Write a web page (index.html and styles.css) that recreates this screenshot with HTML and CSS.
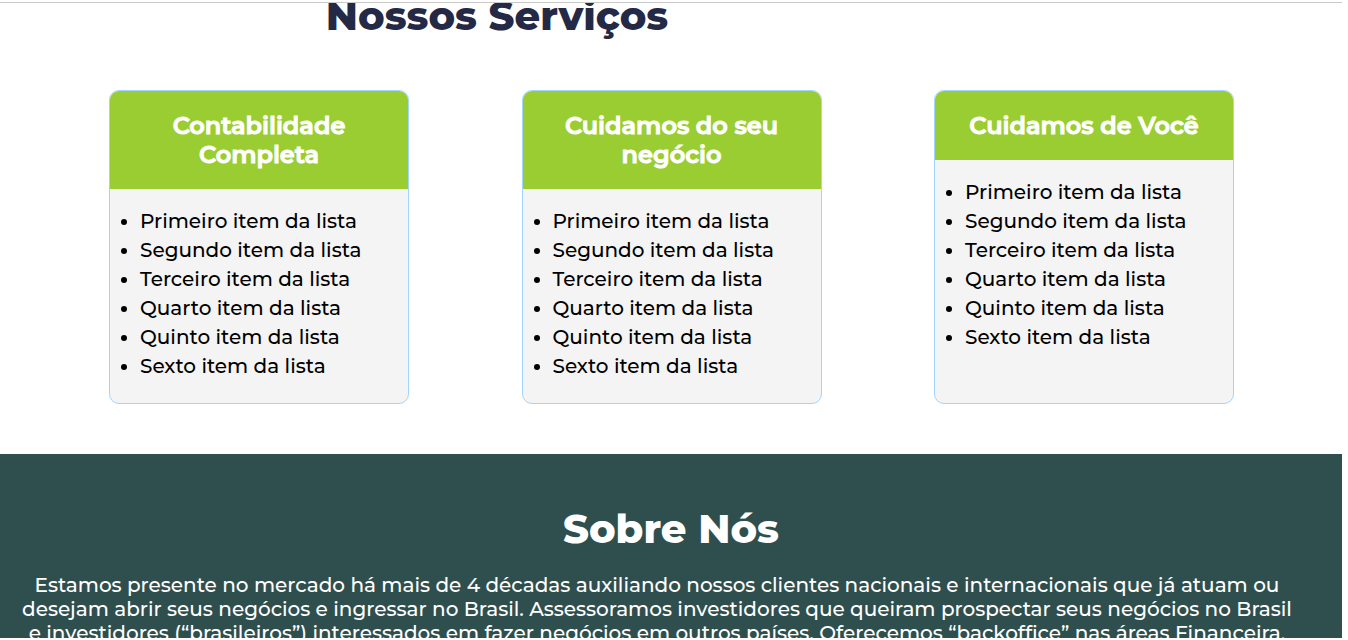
FILE: index.html
```html
<!DOCTYPE html>
<html lang="pt-BR">
<head>
<meta charset="utf-8">
<title>Nossos Serviços</title>
<link rel="stylesheet" href="styles.css">
</head>
<body>
<div class="page">
  <section class="services">
    <h2 class="services-title">Nossos Serviços</h2>
    <div class="cards">
      <article class="card">
        <h3 class="card-title">Contabilidade Completa</h3>
        <ul class="card-list">
          <li>Primeiro item da lista</li>
          <li>Segundo item da lista</li>
          <li>Terceiro item da lista</li>
          <li>Quarto item da lista</li>
          <li>Quinto item da lista</li>
          <li>Sexto item da lista</li>
        </ul>
      </article>
      <article class="card">
        <h3 class="card-title">Cuidamos do seu negócio</h3>
        <ul class="card-list">
          <li>Primeiro item da lista</li>
          <li>Segundo item da lista</li>
          <li>Terceiro item da lista</li>
          <li>Quarto item da lista</li>
          <li>Quinto item da lista</li>
          <li>Sexto item da lista</li>
        </ul>
      </article>
      <article class="card">
        <h3 class="card-title">Cuidamos de Você</h3>
        <ul class="card-list">
          <li>Primeiro item da lista</li>
          <li>Segundo item da lista</li>
          <li>Terceiro item da lista</li>
          <li>Quarto item da lista</li>
          <li>Quinto item da lista</li>
          <li>Sexto item da lista</li>
        </ul>
      </article>
    </div>
  </section>
  <section class="about">
    <h2 class="about-title">Sobre Nós</h2>
    <p class="about-text">Estamos presente no mercado há mais de 4 décadas auxiliando nossos clientes nacionais e internacionais que já atuam ou<br>desejam abrir seus negócios e ingressar no Brasil. Assessoramos investidores que queiram prospectar seus negócios no Brasil<br>e investidores (“brasileiros”) interessados em fazer negócios em outros países. Oferecemos “backoffice” nas áreas Financeira,</p>
  </section>
</div>
</body>
</html>
```
FILE: styles.css
```css
* {
  box-sizing: border-box;
}

body {
  margin: 0;
  background: #fff;
  font-family: Montserrat, "Open Sans", "Noto Sans", sans-serif;
  overflow: hidden;
}

.page {
  display: flex;
  flex-direction: column;
  height: 100vh;
  padding: 2px 6px 2px 0;
  overflow: hidden;
}

.services {
  flex: none;
  border-top: 1px solid #c8c8c8;
  overflow: hidden;
}

.services-title {
  margin: -12px 348px 0 0;
  color: #242a45;
  font-size: 40px;
  font-weight: 800;
  line-height: 50px;
  text-align: center;
}

.cards {
  display: flex;
  justify-content: space-between;
  padding: 49px 108px 50px 109px;
}

.card {
  width: 300px;
  border: 1px solid #a3d4fb;
  border-radius: 10px;
  background: #f4f4f4;
  overflow: hidden;
}

.card-title {
  margin: 0;
  padding: 20px;
  background: #9acd32;
  color: #fff;
  font-size: 24px;
  font-weight: 600;
  -webkit-text-stroke: 1px #fff;
  line-height: 29px;
  text-align: center;
}

.card-list {
  margin: 0;
  padding: 18px 10px 22px 30px;
  color: #000;
  font-size: 20px;
  font-weight: 500;
  line-height: 29px;
}

.about {
  flex: 1;
  min-height: 0;
  padding-top: 50px;
  background: #2f4f4f;
  color: #fff;
  text-align: center;
  overflow: hidden;
}

.about-title {
  margin: 0;
  font-size: 40px;
  font-weight: 800;
  line-height: 50px;
}

.about-text {
  margin: 19px 28px 0 0;
  font-size: 20px;
  font-weight: 500;
  line-height: 24px;
  white-space: nowrap;
}
```
